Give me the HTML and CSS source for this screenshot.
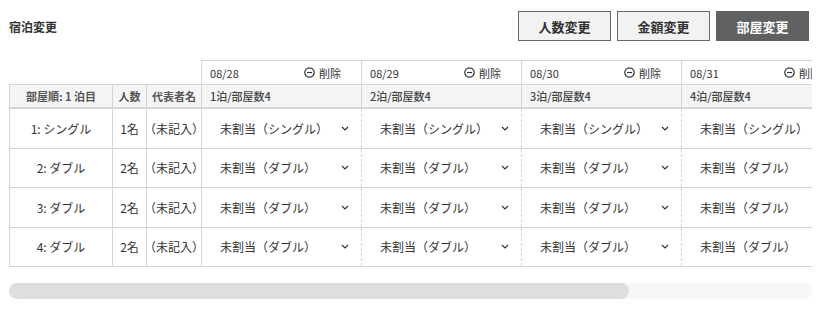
FILE: index.html
```html
<!DOCTYPE html>
<html lang="ja">
<head>
  <meta charset="UTF-8" />
  <meta name="viewport" content="width=device-width, initial-scale=1.0" />
  <title>宿泊変更</title>
  <link rel="stylesheet" href="styles.css">
</head>
<body>
  <div class="page">
    <div class="toolbar">
      <h1 class="title">宿泊変更</h1>
      <div class="actions">
        <button class="btn">人数変更</button>
        <button class="btn">金額変更</button>
        <button class="btn btn-active">部屋変更</button>
      </div>
    </div>

    <div class="table-scroll">
      <table class="stay-table">
        <colgroup>
          <col class="col-room" />
          <col class="col-count" />
          <col class="col-name" />
          <col class="col-day" />
          <col class="col-day" />
          <col class="col-day" />
          <col class="col-day" />
          <col class="col-last" />
        </colgroup>
        <thead>
          <tr class="date-row">
            <th colspan="3" class="blank"></th>
            <th><div class="date-head"><span>08/28</span><span class="remove"><svg width="11" height="11" viewBox="0 0 11 11"><circle cx="5.5" cy="5.5" r="4.7" fill="none" stroke="#333" stroke-width="1.2"/><line x1="3" y1="5.5" x2="8" y2="5.5" stroke="#333" stroke-width="1.2"/></svg>削除</span></div></th>
            <th><div class="date-head"><span>08/29</span><span class="remove"><svg width="11" height="11" viewBox="0 0 11 11"><circle cx="5.5" cy="5.5" r="4.7" fill="none" stroke="#333" stroke-width="1.2"/><line x1="3" y1="5.5" x2="8" y2="5.5" stroke="#333" stroke-width="1.2"/></svg>削除</span></div></th>
            <th><div class="date-head"><span>08/30</span><span class="remove"><svg width="11" height="11" viewBox="0 0 11 11"><circle cx="5.5" cy="5.5" r="4.7" fill="none" stroke="#333" stroke-width="1.2"/><line x1="3" y1="5.5" x2="8" y2="5.5" stroke="#333" stroke-width="1.2"/></svg>削除</span></div></th>
            <th><div class="date-head"><span>08/31</span><span class="remove"><svg width="11" height="11" viewBox="0 0 11 11"><circle cx="5.5" cy="5.5" r="4.7" fill="none" stroke="#333" stroke-width="1.2"/><line x1="3" y1="5.5" x2="8" y2="5.5" stroke="#333" stroke-width="1.2"/></svg>削除</span></div></th>
            <th><div class="date-head"><span>09/01</span><span class="remove"><svg width="11" height="11" viewBox="0 0 11 11"><circle cx="5.5" cy="5.5" r="4.7" fill="none" stroke="#333" stroke-width="1.2"/><line x1="3" y1="5.5" x2="8" y2="5.5" stroke="#333" stroke-width="1.2"/></svg>削除</span></div></th>
          </tr>
          <tr class="label-row">
            <th>部屋順: 1 泊目</th>
            <th>人数</th>
            <th>代表者名</th>
            <th class="night">1泊/部屋数4</th>
            <th class="night">2泊/部屋数4</th>
            <th class="night">3泊/部屋数4</th>
            <th class="night">4泊/部屋数4</th>
            <th class="night">5泊/部屋数4</th>
          </tr>
        </thead>
        <tbody>
          <tr>
            <td><div class="center">1: シングル</div></td>
            <td><div class="center">1名</div></td>
            <td><div class="center">（未記入）</div></td>
            <td class="slot"><div class="slot-select"><span>未割当（シングル）</span><svg width="8" height="5" viewBox="0 0 8 5"><polyline points="1,1 4,4 7,1" fill="none" stroke="#333" stroke-width="1.2"/></svg></div></td>
            <td class="slot"><div class="slot-select"><span>未割当（シングル）</span><svg width="8" height="5" viewBox="0 0 8 5"><polyline points="1,1 4,4 7,1" fill="none" stroke="#333" stroke-width="1.2"/></svg></div></td>
            <td class="slot"><div class="slot-select"><span>未割当（シングル）</span><svg width="8" height="5" viewBox="0 0 8 5"><polyline points="1,1 4,4 7,1" fill="none" stroke="#333" stroke-width="1.2"/></svg></div></td>
            <td class="slot"><div class="slot-select"><span>未割当（シングル）</span><svg width="8" height="5" viewBox="0 0 8 5"><polyline points="1,1 4,4 7,1" fill="none" stroke="#333" stroke-width="1.2"/></svg></div></td>
            <td class="slot"><div class="slot-select"><span>未割当（シングル）</span><svg width="8" height="5" viewBox="0 0 8 5"><polyline points="1,1 4,4 7,1" fill="none" stroke="#333" stroke-width="1.2"/></svg></div></td>
          </tr>
          <tr>
            <td><div class="center">2: ダブル</div></td>
            <td><div class="center">2名</div></td>
            <td><div class="center">（未記入）</div></td>
            <td class="slot"><div class="slot-select"><span>未割当（ダブル）</span><svg width="8" height="5" viewBox="0 0 8 5"><polyline points="1,1 4,4 7,1" fill="none" stroke="#333" stroke-width="1.2"/></svg></div></td>
            <td class="slot"><div class="slot-select"><span>未割当（ダブル）</span><svg width="8" height="5" viewBox="0 0 8 5"><polyline points="1,1 4,4 7,1" fill="none" stroke="#333" stroke-width="1.2"/></svg></div></td>
            <td class="slot"><div class="slot-select"><span>未割当（ダブル）</span><svg width="8" height="5" viewBox="0 0 8 5"><polyline points="1,1 4,4 7,1" fill="none" stroke="#333" stroke-width="1.2"/></svg></div></td>
            <td class="slot"><div class="slot-select"><span>未割当（ダブル）</span><svg width="8" height="5" viewBox="0 0 8 5"><polyline points="1,1 4,4 7,1" fill="none" stroke="#333" stroke-width="1.2"/></svg></div></td>
            <td class="slot"><div class="slot-select"><span>未割当（ダブル）</span><svg width="8" height="5" viewBox="0 0 8 5"><polyline points="1,1 4,4 7,1" fill="none" stroke="#333" stroke-width="1.2"/></svg></div></td>
          </tr>
          <tr>
            <td><div class="center">3: ダブル</div></td>
            <td><div class="center">2名</div></td>
            <td><div class="center">（未記入）</div></td>
            <td class="slot"><div class="slot-select"><span>未割当（ダブル）</span><svg width="8" height="5" viewBox="0 0 8 5"><polyline points="1,1 4,4 7,1" fill="none" stroke="#333" stroke-width="1.2"/></svg></div></td>
            <td class="slot"><div class="slot-select"><span>未割当（ダブル）</span><svg width="8" height="5" viewBox="0 0 8 5"><polyline points="1,1 4,4 7,1" fill="none" stroke="#333" stroke-width="1.2"/></svg></div></td>
            <td class="slot"><div class="slot-select"><span>未割当（ダブル）</span><svg width="8" height="5" viewBox="0 0 8 5"><polyline points="1,1 4,4 7,1" fill="none" stroke="#333" stroke-width="1.2"/></svg></div></td>
            <td class="slot"><div class="slot-select"><span>未割当（ダブル）</span><svg width="8" height="5" viewBox="0 0 8 5"><polyline points="1,1 4,4 7,1" fill="none" stroke="#333" stroke-width="1.2"/></svg></div></td>
            <td class="slot"><div class="slot-select"><span>未割当（ダブル）</span><svg width="8" height="5" viewBox="0 0 8 5"><polyline points="1,1 4,4 7,1" fill="none" stroke="#333" stroke-width="1.2"/></svg></div></td>
          </tr>
          <tr>
            <td><div class="center">4: ダブル</div></td>
            <td><div class="center">2名</div></td>
            <td><div class="center">（未記入）</div></td>
            <td class="slot"><div class="slot-select"><span>未割当（ダブル）</span><svg width="8" height="5" viewBox="0 0 8 5"><polyline points="1,1 4,4 7,1" fill="none" stroke="#333" stroke-width="1.2"/></svg></div></td>
            <td class="slot"><div class="slot-select"><span>未割当（ダブル）</span><svg width="8" height="5" viewBox="0 0 8 5"><polyline points="1,1 4,4 7,1" fill="none" stroke="#333" stroke-width="1.2"/></svg></div></td>
            <td class="slot"><div class="slot-select"><span>未割当（ダブル）</span><svg width="8" height="5" viewBox="0 0 8 5"><polyline points="1,1 4,4 7,1" fill="none" stroke="#333" stroke-width="1.2"/></svg></div></td>
            <td class="slot"><div class="slot-select"><span>未割当（ダブル）</span><svg width="8" height="5" viewBox="0 0 8 5"><polyline points="1,1 4,4 7,1" fill="none" stroke="#333" stroke-width="1.2"/></svg></div></td>
            <td class="slot"><div class="slot-select"><span>未割当（ダブル）</span><svg width="8" height="5" viewBox="0 0 8 5"><polyline points="1,1 4,4 7,1" fill="none" stroke="#333" stroke-width="1.2"/></svg></div></td>
          </tr>
        </tbody>
      </table>
    </div>

    <!-- barra di scorrimento orizzontale -->
    <div class="scrollbar"><div class="scrollbar-thumb"></div></div>
  </div>
</body>
</html>
```

FILE: styles.css
```css
html, body {
  margin: 0;
  padding: 0;
  background: #fff;
  color: #333;
  font-family: "Noto Sans CJK JP", "Noto Sans", sans-serif;
}

.page {
  padding: 11px 9px 0 9px;
}

.toolbar {
  display: flex;
  justify-content: space-between;
  align-items: center;
  height: 30px;
  margin-right: 3px;
}

.title {
  margin: 0;
  font-size: 12px;
  font-weight: 700;
  color: #333;
}

.actions {
  display: flex;
  gap: 6px;
}

.btn {
  width: 93px;
  height: 30px;
  padding: 0;
  border: 1px solid #666;
  background: #f2f2f2;
  color: #333;
  font-family: inherit;
  font-size: 13px;
  font-weight: 700;
}

.btn-active {
  background: #5f6163;
  border-color: #5f6163;
  color: #fff;
}

.table-scroll {
  margin-top: 19px;
  overflow: hidden;
}

.stay-table {
  border-collapse: collapse;
  table-layout: fixed;
  width: 1040px;
}

.col-room { width: 103px; }
.col-count { width: 34px; }
.col-name { width: 55px; }
.col-day { width: 160px; }
.col-last { width: 208px; }

.stay-table th,
.stay-table td {
  border: 1px solid #d4d4d4;
  padding: 0;
  white-space: nowrap;
}

.date-row th {
  height: 23px;
  background: #fff;
  font-size: 11px;
  font-weight: 400;
  text-align: left;
  color: #333;
}

.date-row th.blank {
  border: none;
}

.date-head {
  display: flex;
  justify-content: space-between;
  align-items: center;
  padding: 0 20px 0 8px;
}

.remove {
  display: flex;
  align-items: center;
  gap: 4px;
}

.label-row th {
  height: 22px;
  background: #f5f5f5;
  font-size: 11px;
  font-weight: 700;
  color: #555;
  border-bottom: 2px solid #d4d4d4;
}

.label-row th.night {
  text-align: left;
  padding-left: 8px;
  font-weight: 500;
  color: #444;
}

.stay-table tbody td {
  height: 38.5px;
  font-size: 12px;
  color: #333;
}

.center {
  display: flex;
  justify-content: center;
}

.stay-table td.slot {
  border-left-style: dashed;
  border-right-style: dashed;
}

.slot-select {
  display: flex;
  justify-content: space-between;
  align-items: center;
  padding: 0 12px 0 18px;
}

.scrollbar {
  margin-top: 16px;
  height: 16px;
  border-radius: 8px;
  background: #f7f7f7;
}

.scrollbar-thumb {
  width: 620px;
  height: 100%;
  border-radius: 8px;
  background: #dedede;
}
```
